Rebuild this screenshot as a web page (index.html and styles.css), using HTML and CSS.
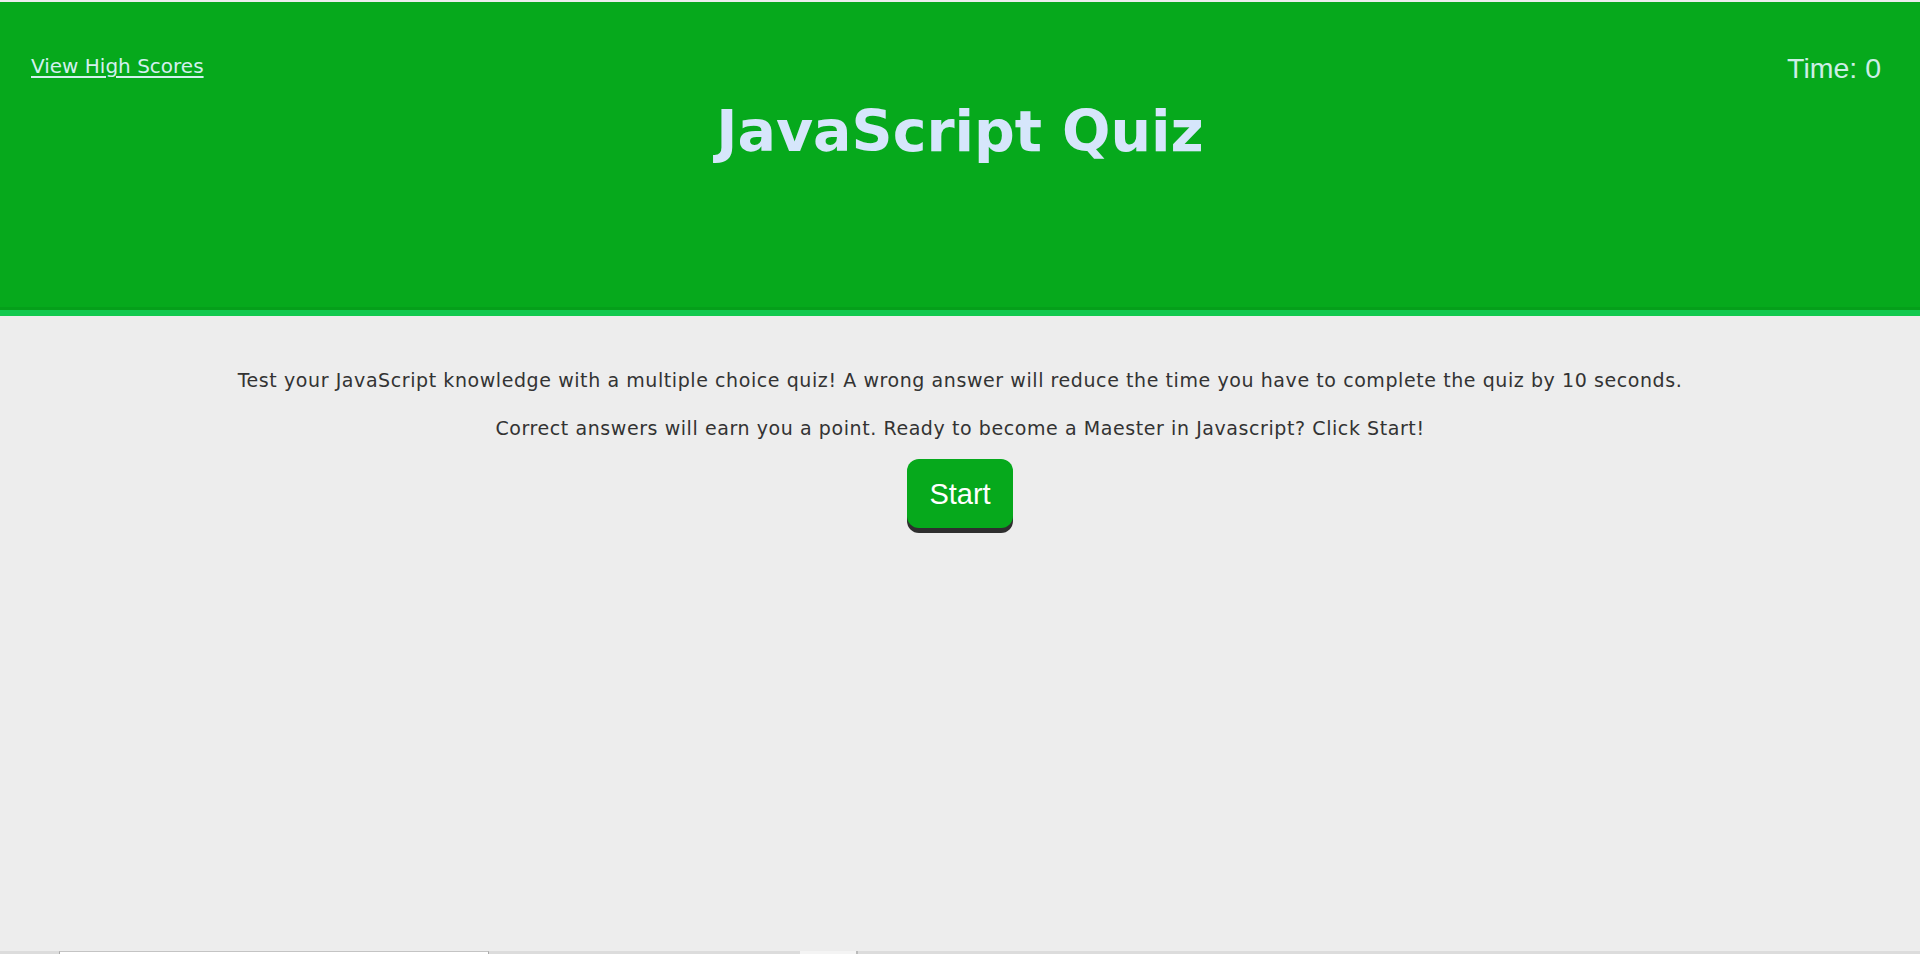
FILE: index.html
```html
<!DOCTYPE html>
<html lang="en">
<head>
<meta charset="utf-8">
<title>JavaScript Quiz</title>
<link rel="stylesheet" href="styles.css">
</head>
<body>
<div class="page">
  <header class="header">
    <div class="header-bar">
      <a class="scores-link" href="#">View High Scores</a>
      <h1 class="title">JavaScript Quiz</h1>
      <div class="timer">Time: 0</div>
    </div>
  </header>
  <main class="intro">
    <p class="intro-text">Test your JavaScript knowledge with a multiple choice quiz! A wrong answer will reduce the time you have to complete the quiz by 10 seconds.</p>
    <p class="intro-text">Correct answers will earn you a point. Ready to become a Maester in Javascript? Click Start!</p>
    <button class="start-btn" type="button">Start</button>
  </main>
  <div class="scrollbar">
    <div class="scrollbar-gap"></div>
    <div class="scrollbar-thumb"></div>
    <div class="scrollbar-track"></div>
    <div class="scrollbar-light"></div>
    <div class="scrollbar-rest"></div>
  </div>
</div>
</body>
</html>
```

FILE: styles.css
```css
* { box-sizing: border-box; }
html, body {
  margin: 0;
  padding: 0;
  height: 100%;
}
body {
  background: #ededed;
  font-family: "DejaVu Sans", Verdana, sans-serif;
  color: #333;
}
.page {
  min-height: 100%;
  display: flex;
  flex-direction: column;
  padding-top: 2px;
  background: #ededed;
}
.header {
  background: #06a91c;
  height: 314px;
  border-bottom: 6px solid #13c94f;
  box-shadow: inset 0 -3px 0 #059f1a;
}
.header-bar {
  display: grid;
  grid-template-columns: 1fr auto 1fr;
  align-items: start;
  padding: 0 31px;
}
.scores-link {
  justify-self: start;
  margin-top: 52px;
  font-size: 20px;
  color: #d3f0f0;
  text-decoration: underline;
  text-underline-offset: 3px;
}
.title {
  margin: 95px 0 0;
  font-size: 57px;
  font-weight: bold;
  color: #d6e6fb;
  line-height: 1.2;
}
.timer {
  justify-self: end;
  margin-top: 50px;
  margin-right: 8px;
  font-family: "Liberation Sans", Arial, sans-serif;
  font-size: 28.5px;
  color: #cdeee6;
}
.intro {
  flex: 1;
  display: flex;
  flex-direction: column;
  align-items: center;
  padding-top: 52px;
}
.intro-text {
  margin: 0 0 24px;
  font-size: 19px;
  letter-spacing: 0.58px;
  line-height: 24px;
  text-align: center;
}
.start-btn {
  margin-top: -5px;
  font-family: "Liberation Sans", Arial, sans-serif;
  font-size: 29px;
  color: #fff;
  background: #06a91c;
  border: none;
  border-radius: 12px;
  padding: 19px 22px 17px;
  box-shadow: 0 5px 0 #2f2f2f;
}
.scrollbar {
  display: flex;
  height: 3px;
  background: #dcdcdc;
}
.scrollbar-gap { width: 59px; }
.scrollbar-thumb { width: 430px; background: #fff; border-top: 1px solid #c4c4c4; border-left: 1px solid #aaa; border-right: 1px solid #aaa; }
.scrollbar-track { width: 311px; }
.scrollbar-light { width: 56px; background: #f4f4f4; }
.scrollbar-rest { flex: 1; border-left: 2px solid #bbb; }
```
